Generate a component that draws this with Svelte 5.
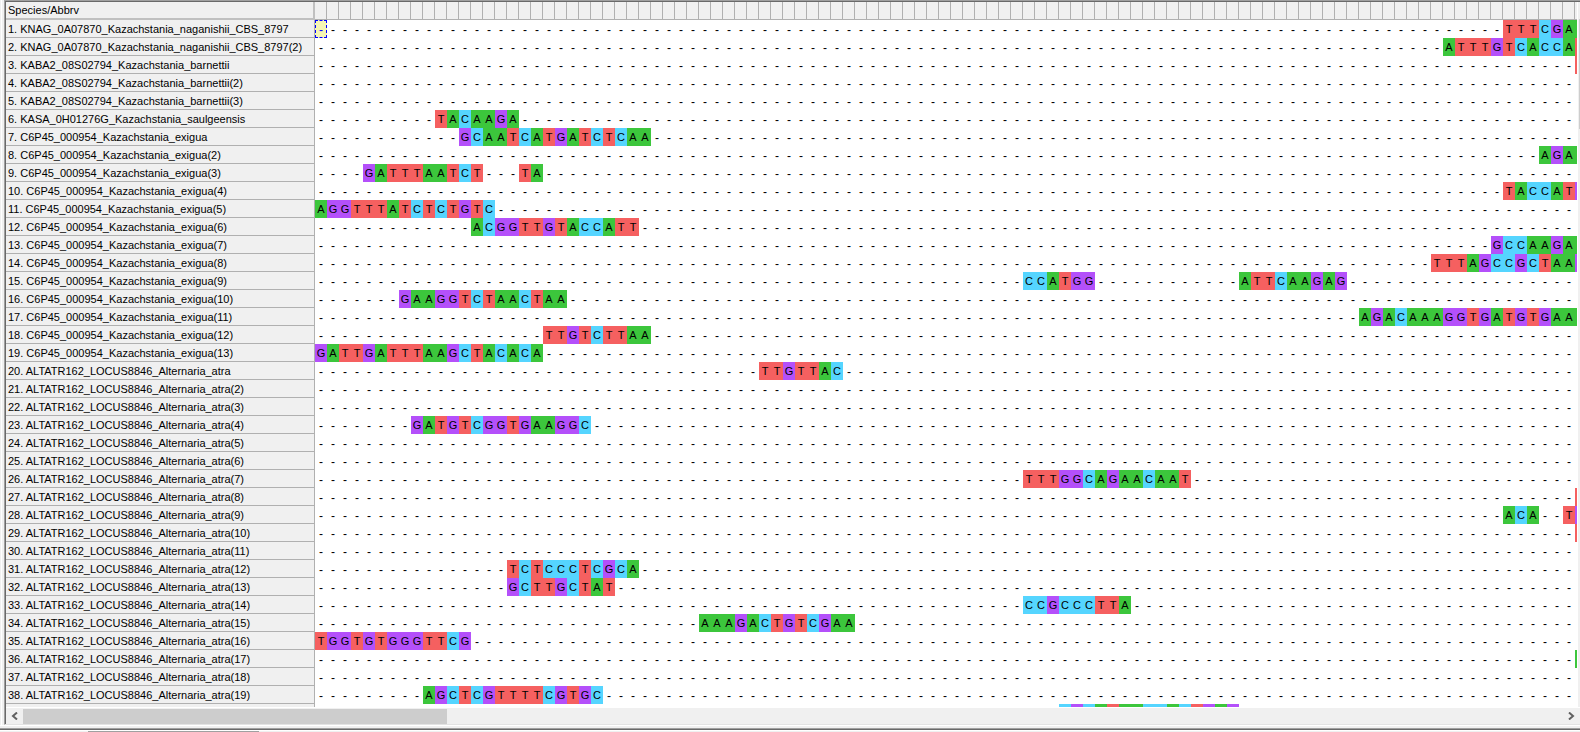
<script>
  const names = [
    ['KNAG_0A07870_Kazachstania_naganishii_CBS_8797', 2],
    ['KABA2_08S02794_Kazachstania_barnettii', 3],
    ['KASA_0H01276G_Kazachstania_saulgeensis', 1],
    ['C6P45_000954_Kazachstania_exigua', 13],
    ['ALTATR162_LOCUS8846_Alternaria_atra', 19]
  ];
  const runs = {
    1: [[99, 'TTTCGAA']],
    2: [[94, 'ATTTGTCACCAT']],
    3: [[105, 'T']],
    6: [[10, 'TACAAGA']],
    7: [[12, 'GCAATCATGATCTCAA']],
    8: [[102, 'AGAA']],
    9: [[4, 'GATTTAATCT'], [17, 'TA']],
    10: [[99, 'TACCATG']],
    11: [[0, 'AGGTTTATCTCTGTC']],
    12: [[13, 'ACGGTTGTACCATT']],
    13: [[98, 'GCCAAGAA']],
    14: [[93, 'TTTAGCCGCTAAG']],
    15: [[59, 'CCATGG'], [77, 'ATTCAAGAG']],
    16: [[7, 'GAAGGTCTAACTAA']],
    17: [[87, 'AGACAAAGGTGATGTGAAA']],
    18: [[19, 'TTGTCTTAA']],
    19: [[0, 'GATTGATTTAAGCTACACA']],
    20: [[37, 'TTGTTAC']],
    23: [[8, 'GATGTCGGTGAAGGC']],
    26: [[59, 'TTTGGCAGAACAAT']],
    27: [[105, 'T']],
    28: [[99, 'ACA'], [104, 'TG']],
    29: [[105, 'T']],
    31: [[16, 'TCTCCCTCGCA']],
    32: [[16, 'GCTTGCTAT']],
    33: [[59, 'CCGCCCTTA']],
    34: [[32, 'AAAGACTGTCGAA']],
    35: [[0, 'TGGTGTGGGTTCG']],
    36: [[105, 'A']],
    38: [[9, 'AGCTCGTTTTCGTGC']],
    39: [[62, 'CGCATAACCACTGAG']]
  };
  const columns = 106;

  function basesOf(n) {
    const bases = Array(columns).fill('-');
    for (const [start, text] of runs[n] ?? []) {
      [...text].forEach((b, k) => (bases[start + k] = b));
    }
    return bases;
  }

  let n = 0;
  const rows = names.flatMap(([name, count]) =>
    Array.from({ length: count }, (_, i) => {
      n += 1;
      return { label: `${n}. ${name}${i ? `(${i + 1})` : ''}`, bases: basesOf(n) };
    })
  );
  // The row at the lower edge is only a sliver, so it carries colours without letters.
  const sliver = basesOf(39);
</script>

<main>
  <section class="panel">
    <div class="content">
      <div class="sheet">
        <table>
          <thead>
            <tr>
              <th class="name head" scope="col">Species/Abbrv</th>
              {#each { length: columns } as _}<td class="tick"></td>{/each}
            </tr>
          </thead>
          <tbody>
            {#each rows as row, r}
              <tr>
                <th class="name" scope="row">{row.label}</th>
                {#each row.bases as base, c}
                  <td class={base === '-' ? 'gap' : base} class:cursor={r === 0 && c === 0}>{c < columns - 1 ? base : ''}</td>
                {/each}
              </tr>
            {/each}
            <tr>
              <th class="name"></th>
              {#each sliver as base}<td class={base === '-' ? 'gap' : base}></td>{/each}
            </tr>
          </tbody>
        </table>
      </div>
      <div class="vbar"><div class="vthumb"></div></div>
    </div>
    <div class="hbar">
      <button aria-label="Scroll left"><svg width="8" height="8" viewBox="0 0 8 8"><path d="M6 .5 2 4 6 7.5" /></svg></button>
      <div class="track"><div class="hthumb"></div></div>
      <button aria-label="Scroll right"><svg width="8" height="8" viewBox="0 0 8 8"><path d="M1 .5 5 4 1 7.5" /></svg></button>
    </div>
  </section>
  <footer><div class="tab"></div></footer>
</main>

<style>
  :global(body) { margin: 0; background: #f0f0f0; }
  main {
    height: 100vh;
    display: flex;
    flex-direction: column;
    overflow: hidden;
    background: #f0f0f0;
    font: 11px/17px "Liberation Sans", Arial, sans-serif;
    color: #000;
  }
  .panel {
    flex: 1;
    min-height: 0;
    display: flex;
    flex-direction: column;
    margin-left: 4px;
    border-top: 1px solid #a0a0a0;
    border-left: 1px solid #a0a0a0;
    border-bottom: 1px solid #e3e3e3;
    box-shadow: inset 1px 1px #696969, -2px 0 #f0f0f0, -3px 0 #fff;
    padding: 1px 0 0 1px;
  }
  .content { flex: 1; min-height: 0; display: flex; }
  .sheet { flex: 1; min-width: 0; overflow: hidden; background: #fff; }
  table { table-layout: fixed; width: 1581px; border-collapse: separate; border-spacing: 0; }
  th, td { padding: 0; font-weight: 400; box-sizing: border-box; }
  td { width: 12px; height: 18px; text-align: center; line-height: 18px; }
  .gap { padding-top: 2px; line-height: 16px; font-size: 12px; }
  .name {
    width: 309px;
    height: 18px;
    padding: 1px 0 0 2px;
    line-height: 16px;
    text-align: left;
    white-space: nowrap;
    background: #f0f0f0;
    border-right: 1px solid #b0b0b0;
    border-bottom: 1px solid #b0b0b0;
  }
  .name.head { border-right-width: 2px; border-bottom-width: 2px; line-height: 15px; border-color: #c0c0c0; }
  .tick { background: #f0f0f0; border-right: 1px solid #b0b0b0; border-bottom: 1px solid #b0b0b0; }
  .A { background: #3cc63c; }
  .T { background: #f56060; }
  .G { background: #b450fa; }
  .C { background: #55d5ff; }
  .cursor { background: #f5f5b4; outline: 1px dashed #00f; outline-offset: -1px; color: #00f; }
  .vbar { width: 3px; background: #f0f0f0; box-sizing: border-box; border-left: 1px solid #fff; padding-top: 17px; }
  .vthumb { height: 16%; margin-left: 1px; background: #cdcdcd; }
  .hbar { height: 16px; display: flex; align-items: center; background: #f0f0f0; border-top: 1px solid #fff; }
  button { width: 17px; height: 15px; padding: 0; border: 0; background: transparent; display: grid; place-items: center; }
  button svg { fill: none; stroke: #606060; stroke-width: 2; }
  .track { flex: 1; height: 15px; }
  .hthumb { width: 27.5%; height: 100%; background: #cdcdcd; }
  footer {
    height: 7px;
    box-sizing: border-box;
    padding: 6px 0 0 88px;
    background: linear-gradient(#fff 1px, #f0f0f0 1px 3px, #a0a0a0 3px 4px, #696969 4px 5px, #fff 5px 6px, #f0f0f0 6px);
  }
  .tab { width: 171px; height: 1px; background: #a0a0a0; }
</style>
